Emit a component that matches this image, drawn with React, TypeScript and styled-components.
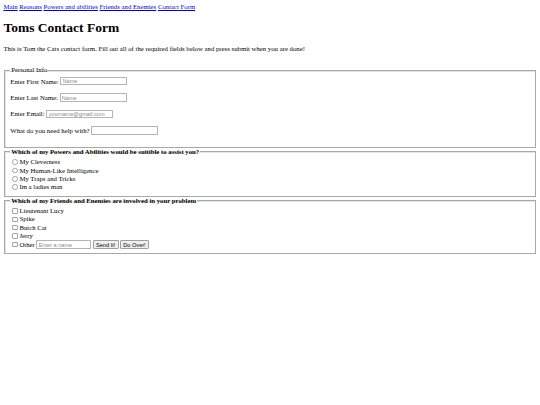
import styled, { createGlobalStyle } from 'styled-components';

const GlobalStyle = createGlobalStyle`
  html, body {
    background: #fff;
  }
  body {
    margin: 3.4px;
    color: #000;
    font-family: "Liberation Serif", "Times New Roman", serif;
    font-size: 6.75px;
  }
`;

const Nav = styled.div`
  line-height: 7.76px;

  a {
    color: #0000ee;
    text-decoration: underline;
  }
`;

const Title = styled.h1`
  font-size: 13.5px;
  font-weight: bold;
  margin: 9px 0;
  line-height: 15.5px;
`;

const Intro = styled.p`
  margin: 6.75px 0;
  line-height: 7.76px;
`;

const Form = styled.form`
  margin: 14px 0 0;
`;

const Fieldset = styled.fieldset`
  margin: 0 0.84px;
  padding: 2.4px 5.1px 4.2px;
  border: 1px solid #a8a8a8;
  box-shadow: inset 1px 1px 0 #e4e4e4;
  min-width: 0;
`;

const Legend = styled.legend<{ $bold?: boolean }>`
  padding: 0 0.84px;
  line-height: 7.76px;
  font-weight: ${p => (p.$bold ? 'bold' : 'normal')};
`;

const FieldRow = styled.div`
  display: flex;
  align-items: center;
  gap: 1.7px;
  height: 8.9px;
  margin-bottom: 7.6px;
`;

const TextInput = styled.input<{ $width?: number }>`
  box-sizing: border-box;
  width: ${p => p.$width ?? 67}px;
  height: 8.6px;
  margin: 0;
  padding: 0 1.2px;
  border: 1px solid #b4b4b4;
  border-radius: 0.6px;
  background: #fff;
  font-family: "Liberation Sans", Arial, sans-serif;
  font-size: 5.6px;
  color: #000;
  outline: none;

  &::placeholder {
    color: #8a8a8a;
  }
`;

const OptionRow = styled.label`
  display: flex;
  align-items: center;
  height: 8.4px;
  line-height: 7.76px;
`;

const Mark = styled.input<{ $round?: boolean }>`
  appearance: none;
  box-sizing: border-box;
  width: 5.5px;
  height: 5.5px;
  margin: 0 1.7px 0 1.9px;
  border: 0.7px solid #a4a4a4;
  border-radius: ${p => (p.$round ? '50%' : '1px')};
  background: #fff;
  flex: none;
`;

const OtherInput = styled(TextInput)`
  margin-left: 1.7px;
`;

const Button = styled.button`
  box-sizing: border-box;
  height: 8.6px;
  margin-left: 1.2px;
  padding: 0 2.4px;
  border: 1px solid #a0a0a0;
  border-radius: 1px;
  background: #efefef;
  font-family: "Liberation Sans", Arial, sans-serif;
  font-size: 5.6px;
  color: #000;
`;

const personal = [
  { label: 'Enter First Name:', placeholder: 'Name' },
  { label: 'Enter Last Name:', placeholder: 'Name' },
  { label: 'Enter Email:', placeholder: 'yourname@gmail.com' },
  { label: 'What do you need help with?', placeholder: '' },
];

const powers = ['My Cleverness', 'My Human-Like Intelligence', 'My Traps and Tricks', 'Im a ladies man'];

const friends = ['Lieutenant Lucy', 'Spike', 'Butch Cat', 'Jerry'];

export default function App() {
  return (
    <>
      <GlobalStyle />
      <Nav>
        <a href='#main'>Main</a> <a href='#reasons'>Reasons</a> <a href='#powers'>Powers and abilities</a>{' '}
        <a href='#friends'>Friends and Enemies</a> <a href='#contact'>Contact Form</a>
      </Nav>
      <Title>Toms Contact Form</Title>
      <Intro>
        This is Tom the Cats contact form. Fill out all of the required fields below and press submit when you are
        done!
      </Intro>
      <Form onSubmit={e => e.preventDefault()}>
        <Fieldset>
          <Legend>Personal Info</Legend>
          {personal.map(field => (
            <FieldRow key={field.label}>
              <span>{field.label}</span>
              <TextInput type='text' placeholder={field.placeholder} />
            </FieldRow>
          ))}
        </Fieldset>
        <Fieldset>
          <Legend $bold>Which of my Powers and Abilities would be suitible to assist you?</Legend>
          {powers.map(power => (
            <OptionRow key={power}>
              <Mark type='radio' name='power' $round />
              {power}
            </OptionRow>
          ))}
        </Fieldset>
        <Fieldset>
          <Legend $bold>Which of my Friends and Enemies are involved in your problem</Legend>
          {friends.map(friend => (
            <OptionRow key={friend}>
              <Mark type='checkbox' />
              {friend}
            </OptionRow>
          ))}
          <OptionRow>
            <Mark type='checkbox' />
            Other
            <OtherInput type='text' placeholder='Enter a name' $width={55} />
            <Button type='submit'>Send It!</Button>
            <Button type='reset'>Do Over!</Button>
          </OptionRow>
        </Fieldset>
      </Form>
    </>
  );
}
